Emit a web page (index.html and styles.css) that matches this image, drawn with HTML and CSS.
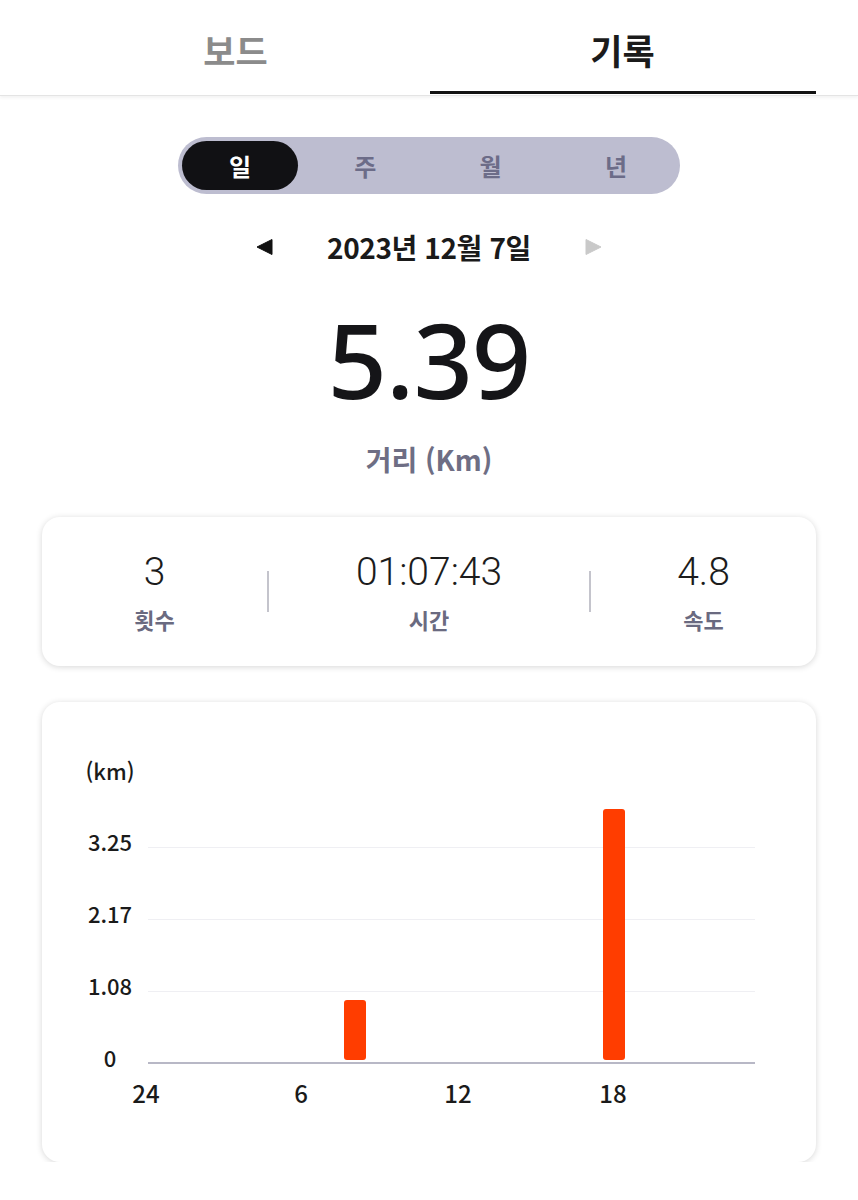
FILE: index.html
```html
<!DOCTYPE html>
<html lang="ko">
<head>
<meta charset="utf-8">
<title>기록</title>
<link rel="stylesheet" href="styles.css">
</head>
<body>
<header class="tabs">
  <div class="tab">보드</div>
  <div class="tab tab-active">기록</div>
</header>
<main class="content">
  <div class="segment">
    <div class="seg-item seg-active">일</div>
    <div class="seg-item">주</div>
    <div class="seg-item">월</div>
    <div class="seg-item">년</div>
  </div>
  <div class="date-row">
    <svg class="arrow" width="17" height="16" viewBox="0 0 17 16"><polygon points="16,0.5 16,15.5 1,8" fill="#111" stroke="#111" stroke-width="1" stroke-linejoin="round"/></svg>
    <div class="date-text">2023년 12월 7일</div>
    <svg class="arrow" width="17" height="16" viewBox="0 0 17 16"><polygon points="1,0.5 1,15.5 16,8" fill="#c9c9c9" stroke="#c9c9c9" stroke-width="1" stroke-linejoin="round"/></svg>
  </div>
  <div class="big-number">5.39</div>
  <div class="big-label">거리 (Km)</div>

  <section class="card stats">
    <div class="stat stat-side">
      <div class="stat-value">3</div>
      <div class="stat-label">횟수</div>
    </div>
    <div class="divider"></div>
    <div class="stat">
      <div class="stat-value">01:07:43</div>
      <div class="stat-label">시간</div>
    </div>
    <div class="divider"></div>
    <div class="stat stat-side">
      <div class="stat-value">4.8</div>
      <div class="stat-label">속도</div>
    </div>
  </section>

  <section class="card chart">
    <div class="unit-row"><span class="unit">(km)</span></div>
    <div class="plot-wrap">
      <div class="rows">
        <div class="row row-first"><span class="ylabel">3.25</span><div class="line"></div></div>
        <div class="row"><span class="ylabel">2.17</span><div class="line"></div></div>
        <div class="row"><span class="ylabel">1.08</span><div class="line"></div></div>
        <div class="row"><span class="ylabel">0</span><div class="line base"></div></div>
      </div>
      <div class="bars">
        <div class="bar" style="left:196px;height:60px"></div>
        <div class="bar" style="left:455px;height:251px"></div>
      </div>
    </div>
    <div class="xaxis">
      <span class="xlabel" style="left:-2px">24</span>
      <span class="xlabel" style="left:153px">6</span>
      <span class="xlabel" style="left:310px">12</span>
      <span class="xlabel" style="left:465px">18</span>
    </div>
  </section>
</main>
</body>
</html>
```

FILE: styles.css
```css
* { box-sizing: border-box; }
html, body { margin: 0; padding: 0; background: #fff; }
body {
  font-family: "Noto Sans CJK KR", "Noto Sans", sans-serif;
  color: #141414;
  width: 858px;
}

.tabs {
  display: flex;
  height: 96px;
  padding: 0 42px;
  border-bottom: 1px solid #e4e4e4;
  box-shadow: 0 2px 3px rgba(0, 0, 0, 0.05);
}
.tab {
  flex: 1;
  display: flex;
  align-items: center;
  justify-content: center;
  font-size: 35px;
  font-weight: 700;
  color: #8b8b8b;
  padding-top: 3px;
  position: relative;
}
.tab-active { color: #1b1b1b; }
.tab-active::after {
  content: "";
  position: absolute;
  left: 1px;
  right: 0;
  bottom: 1px;
  height: 3px;
  background: #111;
}

.content {
  padding: 0 42px;
  display: flex;
  flex-direction: column;
  align-items: center;
}

.segment {
  margin-top: 41px;
  width: 502px;
  height: 57px;
  border-radius: 29px;
  background: #bdbdd0;
  padding: 4px 6px 4px 4px;
  display: flex;
  justify-content: space-between;
}
.seg-item {
  width: 116px;
  display: flex;
  align-items: center;
  justify-content: center;
  font-size: 24px;
  font-weight: 700;
  color: #6c6c88;
  border-radius: 25px;
}
.seg-active { background: #111114; color: #fff; }

.date-row {
  margin-top: 30px;
  height: 46px;
  display: flex;
  align-items: center;
  gap: 54px;
}
.date-text {
  font-size: 28px;
  font-weight: 700;
  color: #1a1a1a;
  letter-spacing: -0.4px;
}
.arrow { display: block; }

.big-number {
  margin-top: 29px;
  font-family: "Noto Sans", sans-serif;
  font-size: 104px;
  font-weight: 500;
  line-height: 120px;
  letter-spacing: -1px;
  color: #151518;
}
.big-label {
  margin-top: 20px;
  font-size: 28px;
  font-weight: 600;
  color: #6e6e84;
  line-height: 40px;
}

.card {
  align-self: stretch;
  background: #fff;
  border-radius: 18px;
  box-shadow: 0 1px 6px rgba(0, 0, 0, 0.16);
}

.stats {
  margin-top: 38px;
  height: 149px;
  display: flex;
  align-items: center;
}
.stat {
  flex: 1;
  display: flex;
  flex-direction: column;
  align-items: center;
}
.stat-side { flex: 0 0 225px; }
.stat-value {
  font-family: "Roboto", sans-serif;
  font-weight: 300;
  font-size: 39px;
  line-height: 46px;
  color: #1c1c1c;
}
.stat-label {
  margin-top: 8px;
  font-size: 22px;
  font-weight: 700;
  color: #6a6a80;
  line-height: 32px;
}
.divider {
  width: 2px;
  height: 41px;
  background: #c4c4cc;
}

.chart {
  margin-top: 36px;
  height: 460px;
  padding: 0 61px 0 0;
}
.unit-row {
  display: grid;
  grid-template-columns: 42px 52px;
  margin-top: 52px;
  height: 32px;
  align-items: center;
}
.unit {
  grid-column: 2;
  text-align: center;
  white-space: nowrap;
  font-size: 22px;
  font-weight: 500;
  line-height: 32px;
  color: #1a1a1a;
}
.plot-wrap { position: relative; }
.rows { display: flex; flex-direction: column; }
.row {
  height: 72px;
  display: grid;
  grid-template-columns: 42px 52px 12px 1fr;
  align-items: end;
}
.row-first { height: 62px; }
.ylabel {
  grid-column: 2;
  text-align: center;
  white-space: nowrap;
  font-size: 22px;
  font-weight: 500;
  line-height: 22px;
  margin-bottom: -4px;
  color: #1a1a1a;
}
.line {
  grid-column: 4;
  height: 1px;
  background: #efeff3;
}
.line.base { height: 2px; background: #b8b8c6; }

.bars {
  position: absolute;
  left: 106px;
  right: 0;
  top: 0;
  bottom: 4px;
}
.bar {
  position: absolute;
  bottom: 0;
  width: 22px;
  background: #ff3d00;
  border-radius: 3px;
}

.xaxis {
  position: relative;
  margin-left: 106px;
  height: 30px;
  margin-top: 14px;
}
.xlabel {
  position: absolute;
  top: 0;
  transform: translateX(-50%);
  font-size: 24px;
  font-weight: 500;
  line-height: 30px;
  color: #1a1a1a;
}
```
